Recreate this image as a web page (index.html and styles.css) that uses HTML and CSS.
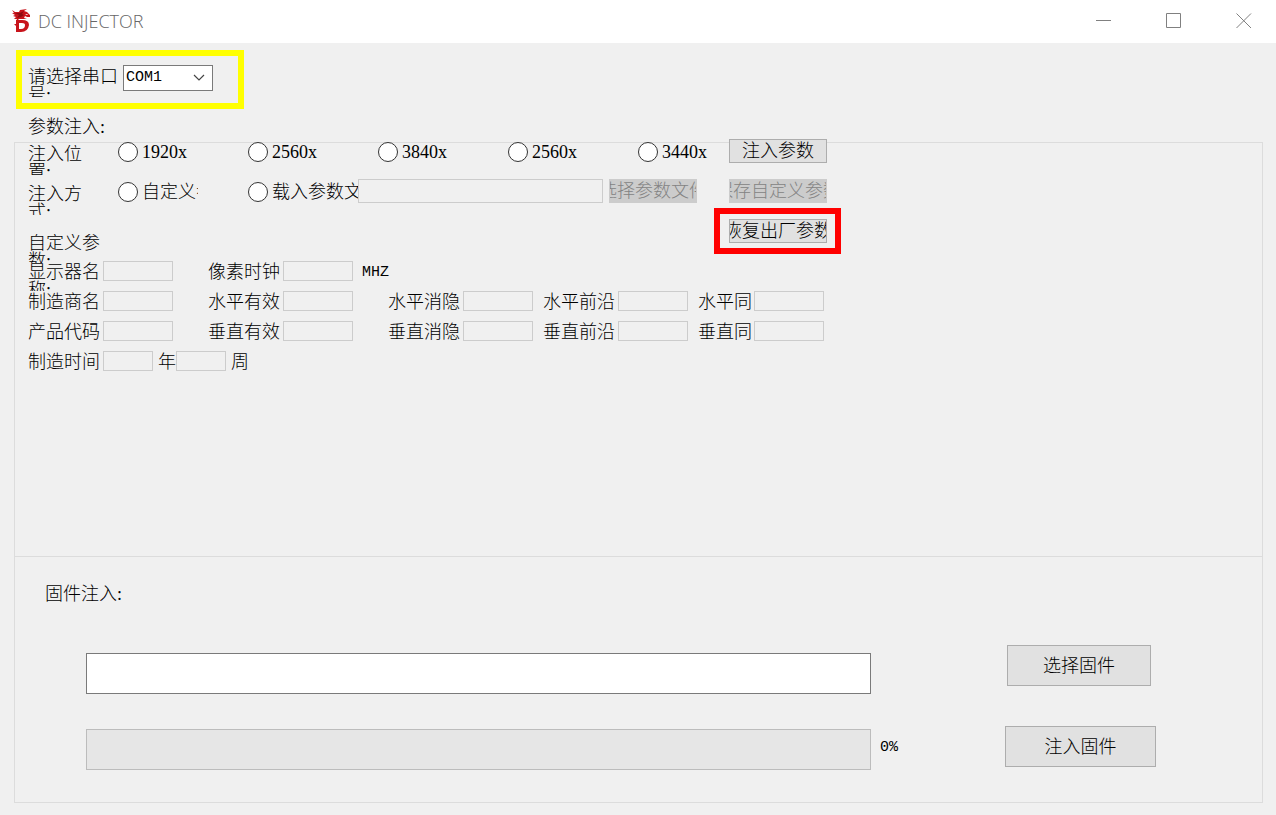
FILE: index.html
```html
<!DOCTYPE html>
<html lang="zh-CN">

<head>
    <meta charset="UTF-8">
    <title>DC INJECTOR</title>
    <link rel="stylesheet" href="styles.css">
</head>

<body>
    <header class="titlebar">
        <svg class="logo" viewBox="0 0 20 24" width="20" height="24">
            <path fill="#c8141c" d="M1 1 L4 3 L8 3 L9 1 L16 0 L13 2 L16 3 L19 6 L19 8 L16 8 L14 7 L13 9 L16 10 L12 10 L8 10 L6 12 L5 12 L6 10 L3 10 L5 8 L2 7 L4 6 L1 4 L3 4 Z" />
            <path fill="#8e0c12" d="M4 4 L9 4 L13 2 L11 5 L13 6 L10 8 L6 9 L8 6 Z" />
            <path fill="#fff" d="M14 5 L17 5 L16 6 Z" />
            <path fill="#c8141c" fill-rule="evenodd" d="M5 11 H11 Q18 11 18 16 Q17 23 10 23 H5 V17 L3 15 H5 Z M8 14 V20 H10 Q14 20 14 16 Q14 14 11 14 Z" />
        </svg>
        <h1>DC INJECTOR</h1>
        <div class="window-buttons">
            <button type="button" aria-label="最小化"><svg viewBox="0 0 16 16" width="16" height="16"><path d="M0 7.5H15" /></svg></button>
            <button type="button" aria-label="最大化"><svg viewBox="0 0 16 16" width="16" height="16"><path d="M0.5 0.5H14.5V14.5H0.5Z" /></svg></button>
            <button type="button" aria-label="关闭"><svg viewBox="0 0 16 16" width="16" height="16"><path d="M0.5 0.5L15 15M15 0.5L0.5 15" /></svg></button>
        </div>
    </header>

    <main>
        <div class="port">
            <label for="port">请选择串口号:</label>
            <div class="select">
                <select id="port">
                    <option>COM1</option>
                </select>
                <svg viewBox="0 0 12 8" width="12" height="8"><path d="M1 1L6 6L11 1" /></svg>
            </div>
        </div>

        <h2 class="params-title">参数注入:</h2>

        <div class="panel">
            <section class="params">
                <div class="top">
                    <div class="options">
                        <div class="row">
                            <span class="caption">注入位置:</span>
                            <label class="radio"><input type="radio" name="position"><span>1920x</span></label>
                            <label class="radio"><input type="radio" name="position"><span>2560x</span></label>
                            <label class="radio"><input type="radio" name="position"><span>3840x</span></label>
                            <label class="radio"><input type="radio" name="position"><span>2560x</span></label>
                            <label class="radio"><input type="radio" name="position"><span>3440x</span></label>
                        </div>
                        <div class="row">
                            <span class="caption">注入方式:</span>
                            <label class="radio custom"><input type="radio" name="mode"><span>自定义参</span></label>
                            <label class="radio load"><input type="radio" name="mode"><span>载入参数文件</span></label>
                            <input class="box file" type="text" aria-label="参数文件" disabled>
                            <button class="btn choose" type="button" disabled>选择参数文件</button>
                        </div>
                        <h3 class="custom-title">自定义参数:</h3>
                    </div>
                    <div class="actions">
                        <button class="btn" type="button">注入参数</button>
                        <button class="btn" type="button" disabled>保存自定义参数</button>
                        <div class="reset"><button class="btn" type="button">恢复出厂参数</button></div>
                    </div>
                </div>

                <div class="fields">
                    <div class="field"><label for="name">显示器名称:</label><input class="box" type="text" id="name" disabled></div>
                    <div class="field clock"><label for="clock">像素时钟</label><input class="box" type="text" id="clock" disabled><span class="unit">MHZ</span></div>

                    <div class="field"><label for="maker">制造商名</label><input class="box" type="text" id="maker" disabled></div>
                    <div class="field"><label for="hActive">水平有效</label><input class="box" type="text" id="hActive" disabled></div>
                    <div class="field"><label for="hBlank">水平消隐</label><input class="box" type="text" id="hBlank" disabled></div>
                    <div class="field"><label for="hFront">水平前沿</label><input class="box" type="text" id="hFront" disabled></div>
                    <div class="field sync"><label for="hSync">水平同</label><input class="box" type="text" id="hSync" disabled></div>

                    <div class="field"><label for="code">产品代码</label><input class="box" type="text" id="code" disabled></div>
                    <div class="field"><label for="vActive">垂直有效</label><input class="box" type="text" id="vActive" disabled></div>
                    <div class="field"><label for="vBlank">垂直消隐</label><input class="box" type="text" id="vBlank" disabled></div>
                    <div class="field"><label for="vFront">垂直前沿</label><input class="box" type="text" id="vFront" disabled></div>
                    <div class="field sync"><label for="vSync">垂直同</label><input class="box" type="text" id="vSync" disabled></div>

                    <div class="field date">
                        <label for="year">制造时间</label><input class="box" type="text" id="year" disabled>
                        <label class="suffix" for="week">年</label><input class="box" type="text" id="week" disabled>
                        <span class="suffix">周</span>
                    </div>
                </div>
            </section>

            <section class="firmware">
                <h2>固件注入:</h2>
                <div class="firmware-grid">
                    <input class="path" type="text" aria-label="固件文件">
                    <button class="btn big" type="button">选择固件</button>
                    <progress id="progress" value="0" max="100" aria-label="注入进度"></progress>
                    <label class="percent" for="progress">0%</label>
                    <button class="btn big wide" type="button">注入固件</button>
                </div>
            </section>
        </div>
    </main>
</body>

</html>
```
FILE: styles.css
```css
* {
    box-sizing: border-box;
}

body {
    margin: 0;
    min-height: 100vh;
    display: flex;
    flex-direction: column;
    background: #f0f0f0;
    color: #000;
    font: 300 18px/18px "Liberation Serif", "Noto Sans CJK SC", sans-serif;
}

button,
input,
select {
    font: inherit;
    color: inherit;
    margin: 0;
    padding: 0;
    border-radius: 0;
}

h1,
h2,
h3 {
    margin: 0;
    font: inherit;
}

/* title bar */
.titlebar {
    display: flex;
    align-items: center;
    height: 43px;
    padding: 0 24px 2px 11px;
    background: #fff;
}

.titlebar h1 {
    margin-left: 7px;
    font: 300 18px/24px "Open Sans", sans-serif;
    color: #666;
}

.window-buttons {
    display: flex;
    gap: 54px;
    margin-left: auto;
}

.window-buttons button {
    width: 16px;
    height: 16px;
    border: none;
    background: none;
}

.window-buttons svg {
    display: block;
    fill: none;
    stroke: #808080;
}

main {
    flex: 1;
    display: flex;
    flex-direction: column;
    padding: 7px 13px 12px 14px;
}

/* serial port */
.port {
    display: flex;
    align-self: flex-start;
    width: 228px;
    height: 59px;
    margin-left: 2px;
    padding: 9px 6px;
    border: 6px solid #ff0;
}

.port label {
    width: 95px;
    height: 32px;
    padding: 3px 3px 0 0;
    overflow: hidden;
}

.select {
    display: grid;
    align-items: center;
    width: 90px;
    height: 26px;
}

.select select,
.select svg {
    grid-area: 1 / 1;
}

.select select {
    appearance: none;
    width: 100%;
    height: 26px;
    padding-left: 2px;
    border: 1px solid #7a7a7a;
    background: #fff;
    font: 15px/24px "Liberation Mono", monospace;
}

.select svg {
    justify-self: end;
    margin-right: 8px;
    fill: none;
    stroke: #444;
    stroke-width: 1.2;
    pointer-events: none;
}

.params-title {
    padding: 9px 14px 6px;
}

/* panel */
.panel {
    flex: 1;
    display: flex;
    flex-direction: column;
    border: 1px solid #dcdcdc;
}

.params {
    flex: 1;
    padding: 0 13px;
}

.top {
    display: flex;
    height: 122px;
    margin-top: -4px;
}

.options {
    flex: none;
    width: 686px;
}

.row {
    display: flex;
    align-items: flex-start;
    height: 40px;
}

.caption {
    flex: none;
    width: 60px;
    height: 30px;
    margin: 6px 30px 0 0;
    overflow: hidden;
}

.radio {
    display: flex;
    flex: none;
    align-items: center;
    gap: 4px;
    width: 130px;
    height: 26px;
    overflow: hidden;
    white-space: nowrap;
}

/* the last option runs up to the action buttons */
.row .radio:last-child {
    width: 76px;
}

.radio input {
    appearance: none;
    flex: none;
    width: 20px;
    height: 20px;
    border: 1px solid #333;
    border-radius: 50%;
    background: #fff;
}

.radio input:checked {
    background: #333;
    box-shadow: inset 0 0 0 4px #fff;
}

.radio.custom {
    width: 80px;
    margin-right: 50px;
}

.radio.load {
    width: 110px;
}

.custom-title {
    width: 75px;
    height: 29px;
    margin-top: 15px;
    overflow: hidden;
}

.box {
    width: 70px;
    height: 20px;
    border: 1px solid #ccc;
    background: #f0f0f0;
}

.box.file {
    width: 245px;
    height: 24px;
    margin-right: 6px;
}

/* buttons */
.btn {
    display: flex;
    align-items: center;
    justify-content: center;
    width: 98px;
    height: 24px;
    border: 1px solid #adadad;
    background: #e1e1e1;
    overflow: hidden;
    white-space: nowrap;
}

.btn:disabled {
    border-color: #ccc;
    background: #ccc;
    color: #838383;
}

.btn.choose {
    width: 88px;
}

.actions {
    flex: none;
    width: 127px;
}

.actions > .btn {
    margin: 0 15px 16px;
}

.reset {
    margin-top: -11px;
    padding: 5px 9px;
    border: 6px solid #f00;
}

/* custom parameters */
.fields {
    display: grid;
    grid-template-columns: 180px 180px 155px 155px 126px;
    grid-auto-rows: 30px;
}

.field {
    display: flex;
}

.field label {
    width: 75px;
    height: 30px;
    padding-top: 2px;
    overflow: hidden;
}

.field.sync label {
    width: 56px;
}

.clock {
    grid-column: 2 / -1;
}

.unit {
    margin-left: 9px;
    font: 15px/24px "Liberation Mono", monospace;
}

.date {
    grid-column: 1 / -1;
}

.date .box {
    width: 50px;
}

.field .suffix {
    width: 23px;
    padding: 2px 0 0 5px;
}

/* firmware */
.firmware {
    padding: 28px 106px 32px 71px;
    border-top: 1px solid #dcdcdc;
}

.firmware h2 {
    margin: 0 0 42px -41px;
}

.firmware-grid {
    display: grid;
    grid-template-columns: 1fr 116px 151px;
    gap: 32px 9px;
}

.path,
progress {
    width: 100%;
    height: 41px;
}

.path {
    margin-top: 8px;
    border: 1px solid #7a7a7a;
    background: #fff;
}

progress {
    appearance: none;
    margin-top: 3px;
    border: 1px solid #bcbcbc;
    background: #e6e6e6;
}

progress::-webkit-progress-bar {
    background: #e6e6e6;
}

progress::-webkit-progress-value {
    background: #06b025;
}

.percent {
    align-self: center;
    font: 15px/18px "Liberation Mono", monospace;
}

.btn.big {
    grid-column: 3;
    width: 144px;
    height: 41px;
    margin-left: 2px;
}

.btn.wide {
    width: 151px;
    margin-left: 0;
}
```
